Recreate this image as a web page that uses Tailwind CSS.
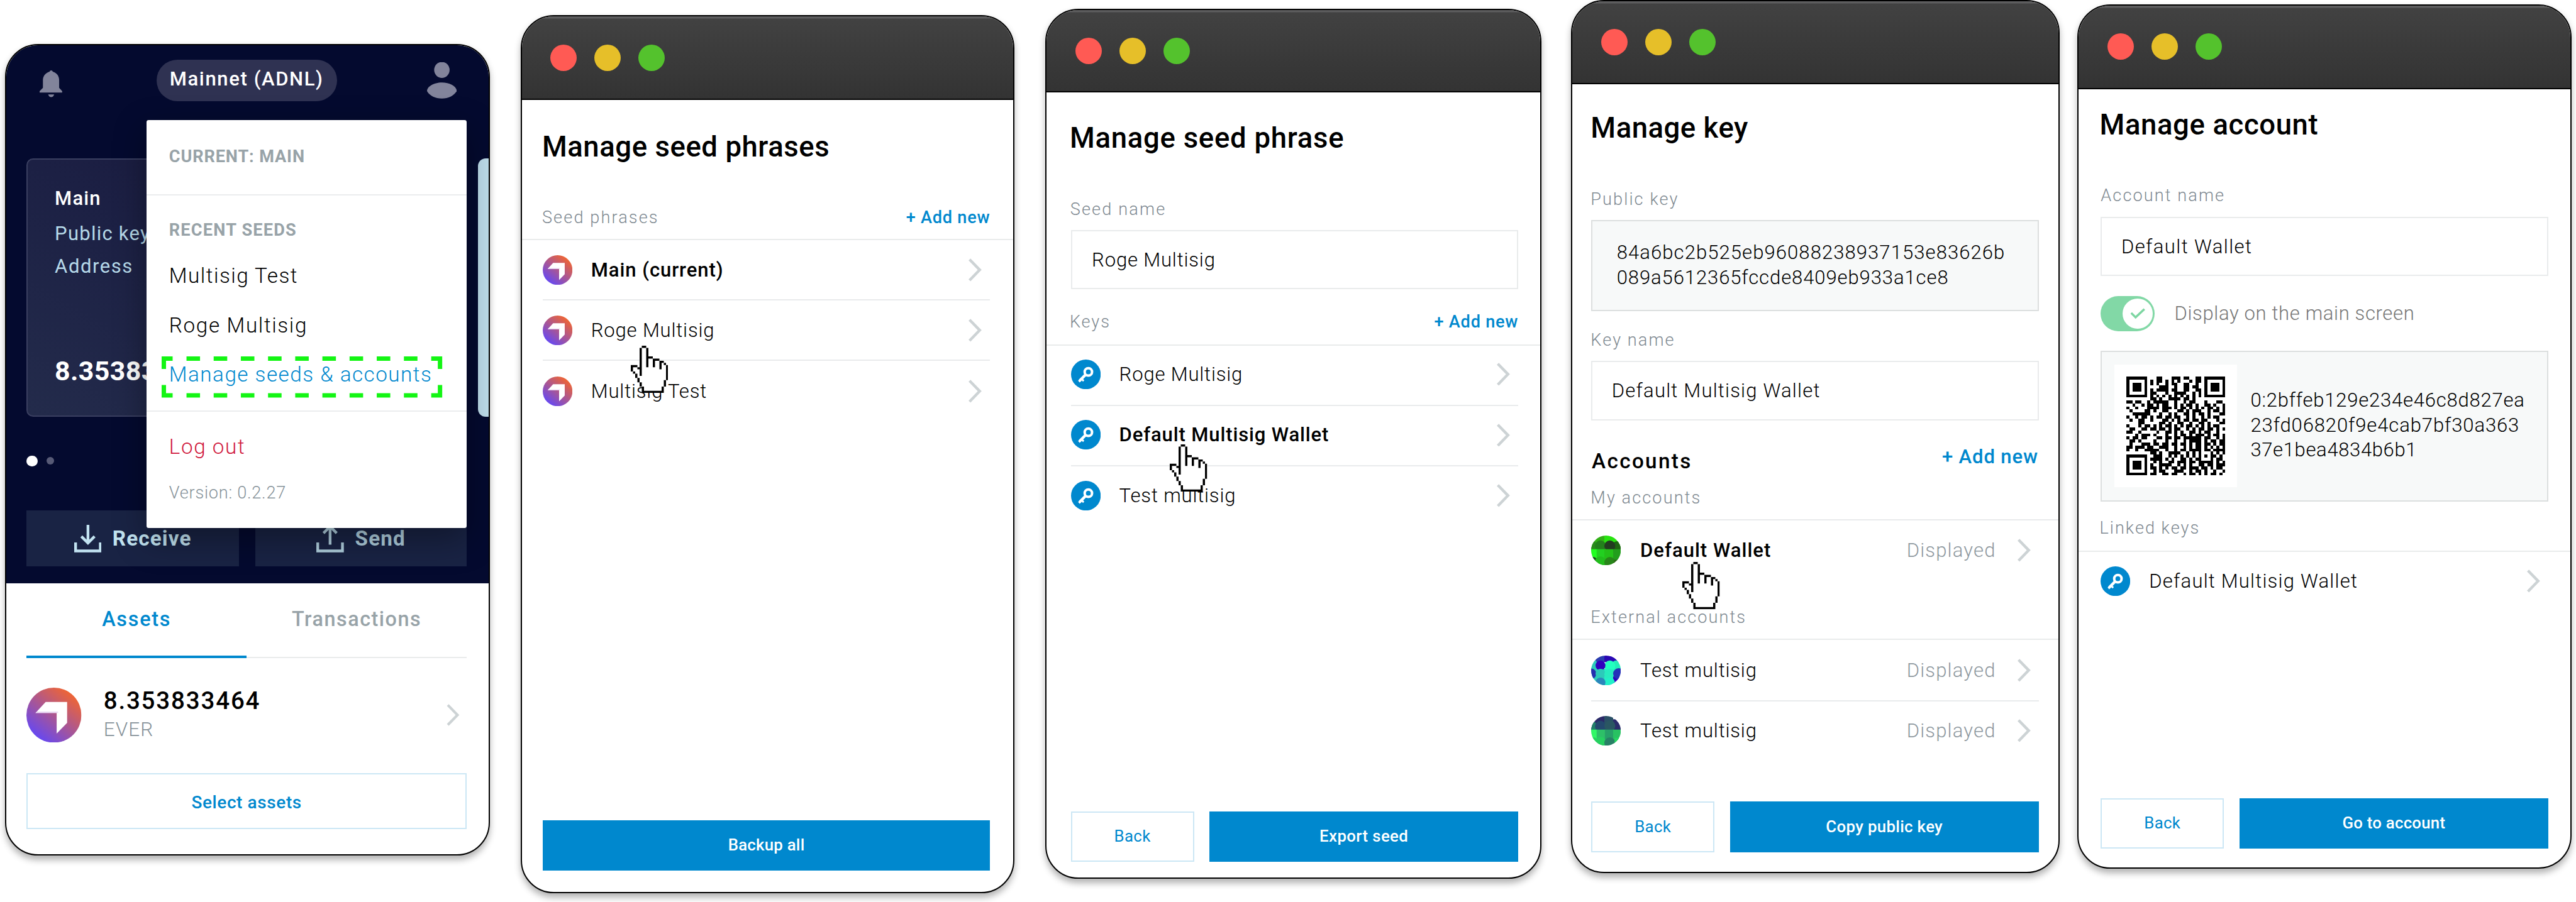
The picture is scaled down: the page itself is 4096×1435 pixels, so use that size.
<!DOCTYPE html>
<html lang="en">
<head>
<meta charset="utf-8">
<title>Seeds and accounts</title>
<script src="https://cdn.jsdelivr.net/npm/@tailwindcss/browser@4"></script>
</head>
<body class="bg-white overflow-hidden">
<svg class="absolute w-0 h-0" aria-hidden="true">
  <defs>
    <linearGradient id="ever-g" x1="0.15" y1="0.9" x2="0.8" y2="0.1"><stop offset="0" stop-color="#6347f5"/><stop offset="1" stop-color="#ee6535"/></linearGradient>
    <clipPath id="round"><circle cx="27" cy="27" r="27"/></clipPath>
  </defs>
  <symbol id="ever" viewBox="0 0 100 100"><circle cx="50" cy="50" r="50" fill="url(#ever-g)"/><path d="M16.5 46 35 26H74V64L55 83.500V46Z" fill="#fff"/><path d="M16.500 46 19 43.500H57.500V46Z" fill="#e9d9f3"/></symbol>
  <symbol id="chev" viewBox="0 0 26 42"><path d="M3 2 21.500 21 3 40" fill="none" stroke="#cdd3d5" stroke-width="5"/></symbol>
  <symbol id="key" viewBox="0 0 54 54"><circle cx="27" cy="27" r="27" fill="#0088ce"/><g fill="none" stroke="#fff"><circle cx="31.500" cy="22.500" r="6.700" stroke-width="4.600"/><path d="M27 27 15.500 38.500" stroke-width="5"/><path d="M18.500 34.500l4.500 4.500M14 37.500l3 3" stroke-width="3.400"/></g></symbol>
  <symbol id="hand" viewBox="0 0 17 22" preserveAspectRatio="none">
    <path fill="#fff" d="M5 1h2v5h3v1h3v1h3v1v7h-1v3h-1v3H5.500v-3h-1v-2h-1v-2h-1v-2h-1v-1H1v-3h3V1z"/>
    <path fill="#000" d="M5 0h2v1H5zM4 1h1v13H4zM7 1h1v9H7zM8 5h2v1H8zM10 6h3v1h-3zM10 6h1v4h-1zM13 7h2v1h-2zM13 7h1v4h-1zM15 8h1v1h-1zM16 9h1v7h-1zM15 16h1v3h-1zM14 19h1v3h-1zM5 21h10v1H5zM5 19h1v2H5zM4 17h1v2H4zM3 15h1v2H3zM2 13h1v2H2zM1 12h1v1H1zM0 9h1v3H0zM0 9h3v1H0zM3 10h1v1H3z"/>
  </symbol>
</svg>

<main class="flex items-start w-[4682px] h-[1640px] [zoom:0.87484] font-[Roboto,sans-serif] text-black text-[35.5px] leading-none whitespace-nowrap">

  <!-- Wallet home with profile menu -->
  <section class="relative shrink-0 ml-[9px] mt-[80px] w-[882px] h-[1476px] rounded-[60px] border-3 border-black bg-white overflow-hidden shadow-[0_8px_12px_rgba(0,0,0,0.3)] flex flex-col">
    <div class="relative shrink-0 h-[978px] bg-[#040a2f] flex flex-col">
      <header class="flex items-center mt-[26px] h-[76px]">
        <svg class="ml-[61px] mt-[10px] w-[42px] h-[51px] shrink-0" viewBox="0 0 42 51" fill="#82849b"><path d="M18 4.500a3.200 3.200 0 0 1 6 0C32 7 35.500 13 35.500 20v14L41 40v2.500H0V40l6-6V20C6 13 10 7 18 4.500Z"/><path d="M15.500 46h11c-1 3-3 5-5.500 5s-4.500-2-5.500-5Z"/></svg>
        <div class="ml-[170px] w-[328px] h-[76px] rounded-full bg-[#2f3252] text-white font-medium tracking-[1.83px] flex items-center justify-center pb-[6px]">Mainnet (ADNL)</div>
        <svg class="ml-[164px] w-[54px] h-[66px] shrink-0" viewBox="0 0 54 66" fill="#82849b"><ellipse cx="27" cy="14" rx="14" ry="14.500"/><path d="M27 37c15 0 27 7.500 27 15.500C49 61 39 66 27 66S5 61 0 52.500C0 44.500 12 37 27 37Z"/></svg>
      </header>
      <div class="flex mt-[104px] h-[470px] ml-[37px] overflow-hidden">
        <div class="shrink-0 w-[800px] rounded-[12px] border-3 border-[#3a3f60] bg-linear-to-tr from-[#232b4b] via-[#1c2044] to-[#17163a] pl-[49px] pt-[38px] text-[#b6d9e9]">
          <div class="h-[66px] leading-[66px] text-white font-medium tracking-[1.33px]">Main</div>
          <div class="h-[62px] leading-[62px] tracking-[1.4px]">Public key</div>
          <div class="h-[58px] leading-[58px] tracking-[1.77px]">Address</div>
          <div class="mt-[130px] h-[60px] leading-[60px] text-white text-[49px] font-bold tracking-[0.44px]">8.353833464</div>
        </div>
        <div class="ml-[20px] shrink-0 w-[400px] rounded-[14px] bg-[#bfdeec]"></div>
      </div>
      <div class="flex items-center gap-[16px] mt-[70px] ml-[37px] h-[20px]"><i class="size-[20px] rounded-full bg-white"></i><i class="size-[14px] rounded-full bg-[#575a76] -mt-px"></i></div>
      <div class="flex mt-[80px] ml-[37px] gap-[30px] h-[102px] text-[#c2e3f1] text-[38px] font-bold">
        <div class="w-[386px] bg-[#192344] flex items-center justify-center gap-[20px] tracking-[1.3px]">
          <svg class="size-[50px]" viewBox="0 0 50 50" fill="none" stroke="currentColor" stroke-width="5"><path d="M2.500 32v15.500h45V32M25 0v34M13 21l12 12 12-12"/></svg>Receive
        </div>
        <div class="w-[384px] bg-[#192344] flex items-center justify-center gap-[20px] tracking-[1.3px] text-[#b0cfde]">
          <svg class="size-[50px]" viewBox="0 0 50 50" fill="none" stroke="currentColor" stroke-width="5"><path d="M2.500 32v15.500h45V32M25 36V3M13 15 25 3l12 12"/></svg>Send
        </div>
      </div>

      <div class="absolute left-[255px] top-[136px] w-[582px] h-[742px] rounded-[4px] bg-white shadow-[0_20px_60px_rgba(0,0,0,0.35)] flex flex-col">
        <div class="h-[137px] border-b-3 border-[#ebedee] pl-[41px] flex items-center text-[31px] font-bold text-[#98a3a8] tracking-[1px]">CURRENT: MAIN</div>
        <div class="pl-[41px] mt-[44px] h-[40px] leading-[40px] text-[31px] font-bold text-[#98a3a8] tracking-[1.38px]">RECENT SEEDS</div>
        <div class="pl-[41px] mt-[18px] text-[38px] font-light leading-[90px]">
          <div class="tracking-[1.71px]">Multisig Test</div>
          <div class="tracking-[1.88px]">Roge Multisig</div>
          <div class="relative tracking-[1.7px] text-[#0088ce]">Manage seeds &amp; accounts
            <svg class="absolute -left-[13px] top-[11px] w-[510px] h-[75px]" viewBox="0 0 510 75" fill="none" stroke="#14f514" stroke-width="8">
              <path d="M20 4H4V23M490 4h16V23M20 71H4V52M490 71h16V52"/>
              <path d="M45.200 4H466M45.200 71H466" stroke-dasharray="24.600 24.800"/>
            </svg>
          </div>
        </div>
        <div class="mt-[19px] border-t-3 border-[#ebedee] pt-[35px] pl-[41px]">
          <div class="h-[60px] leading-[60px] text-[38px] font-light text-[#d0173c] tracking-[1.82px]">Log out</div>
          <div class="mt-[33px] h-[40px] leading-[40px] text-[31px] font-light text-[#87939a] tracking-[0.88px]">Version: 0.2.27</div>
        </div>
      </div>
    </div>

    <div class="flex h-[136px] ml-[37px] w-[800px] text-[37px] font-medium text-center">
      <div class="w-[400px] h-[136px] leading-[131px] border-b-5 border-[#0088ce] text-[#0088ce] tracking-[2px]">Assets</div>
      <div class="w-[400px] h-[136px] leading-[131px] border-b-3 border-[#e9ebec] text-[#98a3a8] tracking-[1.74px]">Transactions</div>
    </div>
    <div class="flex items-center mt-[54px] h-[100px] ml-[37px] w-[800px]">
      <svg class="size-[100px]"><use href="#ever"/></svg>
      <div class="ml-[40px] grow">
        <div class="h-[53px] leading-[53px] text-[44px] font-medium tracking-[2.1px]">8.353833464</div>
        <div class="h-[52px] leading-[52px] text-[36px] font-light text-[#87939a] tracking-[1.3px]">EVER</div>
      </div>
      <svg class="w-[26px] h-[40px] mr-[12px]"><use href="#chev"/></svg>
    </div>
    <div class="mt-[56px] ml-[37px] w-[800px] h-[102px] border-3 border-[#cce7f5] text-[#0088ce] text-[32px] font-medium tracking-[0.7px] flex items-center justify-center pt-[5px]">Select assets</div>
  </section>

  <!-- Manage seed phrases -->
  <section class="relative shrink-0 ml-[55px] mt-[28px] w-[898px] h-[1596px] rounded-[60px] border-3 border-black bg-white overflow-hidden shadow-[0_8px_12px_rgba(0,0,0,0.3)] flex flex-col">
    <div class="shrink-0 h-[152px] border-b-3 border-black bg-linear-to-b from-[#424242] to-[#333333] shadow-[inset_0_4px_0_#5d5d5e] flex items-center gap-[32px] pl-[52px]"><i class="size-[48px] rounded-full bg-[#ff5a54]"></i><i class="size-[48px] rounded-full bg-[#e6bf29]"></i><i class="size-[48px] rounded-full bg-[#54c22d]"></i></div>
    <h1 class="pl-[37px] h-[167px] leading-[171px] text-[52px] font-medium tracking-[0.65px]">Manage seed phrases</h1>
    <div class="mt-[9px] h-[78px] border-b-3 border-[#e9ebec] pl-[37px] pr-[42px] flex items-center justify-between text-[31px]"><span class="font-light text-[#7f8a92] tracking-[2.42px]">Seed phrases</span><span class="font-medium text-[#0088ce] tracking-[0.88px]">+ Add new</span></div>
    <div class="ml-[38px] mr-[42px] font-light">
      <div class="h-[110px] border-b-3 border-[#e9ebec] flex items-center pt-[2px]"><svg class="size-[54px]"><use href="#ever"/></svg><span class="ml-[34px] grow font-medium tracking-[1.06px]">Main (current)</span><svg class="w-[26px] h-[42px] mr-[14px]"><use href="#chev"/></svg></div>
      <div class="h-[110px] border-b-3 border-[#e9ebec] flex items-center pt-[2px]"><svg class="size-[54px]"><use href="#ever"/></svg><span class="ml-[34px] grow tracking-[0.95px]">Roge Multisig</span><svg class="w-[26px] h-[42px] mr-[14px]"><use href="#chev"/></svg></div>
      <div class="h-[110px] flex items-center"><svg class="size-[54px]"><use href="#ever"/></svg><span class="ml-[34px] grow tracking-[0.95px]">Multisig Test</span><svg class="w-[26px] h-[42px] mr-[14px]"><use href="#chev"/></svg></div>
    </div>
    <div class="mt-auto mb-[38px] ml-[38px] mr-[42px] h-[92px] bg-[#0088ce] text-white text-[29.5px] font-medium tracking-[0.27px] flex items-center justify-center">Backup all</div>
    <svg class="absolute left-[198px] top-[598px] w-[68px] h-[86px]"><use href="#hand"/></svg>
  </section>

  <!-- Manage seed phrase -->
  <section class="relative shrink-0 ml-[56px] mt-[16px] w-[902px] h-[1582px] rounded-[60px] border-3 border-black bg-white overflow-hidden shadow-[0_8px_12px_rgba(0,0,0,0.3)] flex flex-col">
    <div class="shrink-0 h-[150px] border-b-3 border-black bg-linear-to-b from-[#424242] to-[#333333] shadow-[inset_0_4px_0_#5d5d5e] flex items-center gap-[32px] pl-[52px]"><i class="size-[48px] rounded-full bg-[#ff5a54]"></i><i class="size-[48px] rounded-full bg-[#e6bf29]"></i><i class="size-[48px] rounded-full bg-[#54c22d]"></i></div>
    <h1 class="pl-[42px] h-[163px] leading-[167px] text-[52px] font-medium tracking-[0.85px]">Manage seed phrase</h1>
    <div class="pl-[43px] mt-[34px] h-[30px] leading-[30px] text-[31px] font-light text-[#7f8a92] tracking-[2.45px]">Seed name</div>
    <div class="mt-[23px] ml-[44px] mr-[40px] h-[108px] border-3 border-[#e9ebec] pl-[36px] flex items-center font-light tracking-[0.95px]">Roge Multisig</div>
    <div class="mt-[19px] h-[83px] border-b-3 border-[#e9ebec] pl-[42px] pr-[40px] flex items-center justify-between text-[31px]"><span class="font-light text-[#7f8a92] tracking-[2.2px]">Keys</span><span class="font-medium text-[#0088ce] tracking-[0.88px]">+ Add new</span></div>
    <div class="ml-[44px] mr-[40px] font-light">
      <div class="h-[110px] border-b-3 border-[#e9ebec] flex items-center pb-[2px]"><svg class="size-[54px]"><use href="#key"/></svg><span class="ml-[34px] grow tracking-[0.95px]">Roge Multisig</span><svg class="w-[26px] h-[42px] mr-[14px]"><use href="#chev"/></svg></div>
      <div class="h-[110px] border-b-3 border-[#e9ebec] flex items-center pb-[2px]"><svg class="size-[54px]"><use href="#key"/></svg><span class="ml-[34px] grow font-medium tracking-[0.98px]">Default Multisig Wallet</span><svg class="w-[26px] h-[42px] mr-[14px]"><use href="#chev"/></svg></div>
      <div class="h-[106px] flex items-center"><svg class="size-[54px]"><use href="#key"/></svg><span class="ml-[34px] grow tracking-[0.95px]">Test multisig</span><svg class="w-[26px] h-[42px] mr-[14px]"><use href="#chev"/></svg></div>
    </div>
    <div class="mt-auto mb-[28px] ml-[44px] mr-[40px] h-[92px] flex gap-[28px] text-[29.5px]">
      <div class="w-[224px] border-3 border-[#cce7f5] text-[#0088ce] tracking-[0.39px] flex items-center justify-center">Back</div>
      <div class="grow bg-[#0088ce] text-white font-medium tracking-[0.45px] flex items-center justify-center">Export seed</div>
    </div>
    <svg class="absolute left-[224px] top-[790px] w-[68px] h-[86px]"><use href="#hand"/></svg>
  </section>

  <!-- Manage key -->
  <section class="relative shrink-0 ml-[54px] w-[888px] h-[1588px] rounded-[60px] border-3 border-black bg-white overflow-hidden shadow-[0_8px_12px_rgba(0,0,0,0.3)] flex flex-col">
    <div class="shrink-0 h-[151px] border-b-3 border-black bg-linear-to-b from-[#424242] to-[#333333] shadow-[inset_0_4px_0_#5d5d5e] flex items-center gap-[32px] pl-[52px]"><i class="size-[48px] rounded-full bg-[#ff5a54]"></i><i class="size-[48px] rounded-full bg-[#e6bf29]"></i><i class="size-[48px] rounded-full bg-[#54c22d]"></i></div>
    <h1 class="pl-[33px] h-[156px] leading-[160px] text-[52px] font-medium tracking-[0.6px]">Manage key</h1>
    <div class="pl-[33px] mt-[38px] h-[30px] leading-[30px] text-[31px] font-light text-[#7f8a92] tracking-[2.4px]">Public key</div>
    <div class="mt-[23px] ml-[34px] mr-[36px] h-[166px] border-3 border-[#dcdfdf] bg-[#f7f9f9] pl-[44px] pt-[34px] font-light leading-[45.5px]">
      <div class="tracking-[1.22px]">84a6bc2b525eb96088238937153e83626b</div>
      <div class="tracking-[1.02px]">089a5612365fccde8409eb933a1ce8</div>
    </div>
    <div class="pl-[33px] mt-[37px] h-[30px] leading-[30px] text-[31px] font-light text-[#7f8a92] tracking-[2.4px]">Key name</div>
    <div class="mt-[23px] ml-[34px] mr-[36px] h-[108px] border-3 border-[#e9ebec] pl-[35px] flex items-center font-light tracking-[1.37px]">Default Multisig Wallet</div>
    <div class="mt-[54px] ml-[35px] mr-[37px] h-[40px] flex justify-between font-medium"><span class="text-[38px] leading-[40px] tracking-[2.7px]">Accounts</span><span class="text-[35.5px] leading-[26px] text-[#0088ce] tracking-[1px]">+ Add new</span></div>
    <div class="mt-[9px] h-[79px] border-b-3 border-[#e9ebec] pl-[33px] flex items-center text-[31px] font-light text-[#7f8a92] tracking-[2.4px]">My accounts</div>
    <div class="ml-[34px] mr-[36px] h-[110px] flex items-center font-light">
      <svg class="size-[54px]" viewBox="0 0 54 54"><g clip-path="url(#round)"><path fill="#32b016" d="M0 0h24v27H0z"/><path fill="#28e310" d="M24 0h30v27H24z"/><circle cx="1" cy="19" r="10" fill="#2a8c1c"/><circle cx="48" cy="20" r="10" fill="#1f6612"/><circle cx="17" cy="19" r="10" fill="#23801c"/><circle cx="34" cy="19" r="10" fill="#233c20"/><path fill="#1f6612" d="M44 16h10v9H44z"/><path fill="#20ff20" d="M0 25h11v20H0z"/><path fill="#22d020" d="M10 25h14v29H10z"/><path fill="#24c018" d="M24 25h16v20H24z"/><path fill="#229e1c" d="M40 25h14v20H40z"/><circle cx="4" cy="46" r="7" fill="#1d4a20"/><circle cx="17" cy="48" r="10" fill="#22bc1c"/><circle cx="34" cy="49" r="10" fill="#28861a"/><path fill="#2a6814" d="M42 44h12v10H40z"/></g></svg>
      <span class="ml-[35px] font-medium tracking-[1.15px]">Default Wallet</span><span class="ml-auto text-[#8f999f] tracking-[1.32px]">Displayed</span><svg class="ml-[38px] w-[26px] h-[42px] mr-[14px]"><use href="#chev"/></svg>
    </div>
    <div class="mt-[29px] h-[79px] border-b-3 border-[#e9ebec] pl-[33px] flex items-center text-[31px] font-light text-[#7f8a92] tracking-[2.37px]">External accounts</div>
    <div class="ml-[34px] mr-[36px] font-light">
      <div class="h-[112px] border-b-3 border-[#e9ebec] flex items-center">
        <svg class="size-[54px]" viewBox="0 0 54 54"><g clip-path="url(#round)"><path fill="#2a3db0" d="M0 0h24v12H0z"/><path fill="#2a08b4" d="M24 0h30v12H24z"/><path fill="#2ccaba" d="M0 9h12v45H0z"/><path fill="#2dcfba" d="M8 24h18v30H8z"/><circle cx="16" cy="6" r="8" fill="#2a3db0"/><circle cx="48" cy="20" r="12" fill="#24ecb8"/><path fill="#2a08b4" d="M34 0h20v9H34z"/><circle cx="34" cy="19" r="10" fill="#22ffc0"/><path fill="#24f0c4" d="M24 25h18v29H24z"/><circle cx="17" cy="18" r="9" fill="#3000be"/><circle cx="0" cy="33" r="9.500" fill="#2530ae"/><circle cx="17" cy="33" r="9" fill="#2ccaba"/><circle cx="34" cy="34" r="10" fill="#27ecc0"/><path fill="#3000be" d="M40 38h14v16H40z"/><circle cx="50" cy="33" r="10" fill="#2530b8"/><circle cx="34" cy="49" r="9" fill="#22f0c8"/><circle cx="17" cy="49" r="9" fill="#2b86bb"/></g></svg>
        <span class="ml-[35px] tracking-[0.95px]">Test multisig</span><span class="ml-auto text-[#8f999f] tracking-[1.32px]">Displayed</span><svg class="ml-[38px] w-[26px] h-[42px] mr-[14px]"><use href="#chev"/></svg>
      </div>
      <div class="h-[106px] flex items-center">
        <svg class="size-[54px]" viewBox="0 0 54 54"><g clip-path="url(#round)"><path fill="#2b2a68" d="M0 0h24v27H0z"/><path fill="#2a5066" d="M24 0h16v27H24z"/><path fill="#2a2c6a" d="M40 6h14v20H40z"/><circle cx="2" cy="19" r="9" fill="#208068"/><circle cx="17" cy="19" r="10" fill="#24486e"/><circle cx="34" cy="18" r="10" fill="#2a5662"/><path fill="#30f866" d="M0 25h11v20H0z"/><path fill="#2dc068" d="M10 25h16v29H10z"/><path fill="#26a068" d="M25 25h16v20H25z"/><path fill="#28c262" d="M40 25h14v29H40z"/><circle cx="4" cy="48" r="9" fill="#24d45e"/><circle cx="17" cy="48" r="10" fill="#26d060"/><circle cx="34" cy="49" r="10" fill="#288066"/><path fill="#24d860" d="M43 40h11v14H42z"/></g></svg>
        <span class="ml-[35px] tracking-[0.95px]">Test multisig</span><span class="ml-auto text-[#8f999f] tracking-[1.32px]">Displayed</span><svg class="ml-[38px] w-[26px] h-[42px] mr-[14px]"><use href="#chev"/></svg>
      </div>
    </div>
    <div class="mt-auto mb-[36px] ml-[34px] mr-[36px] h-[92px] flex gap-[28px] text-[29.5px]">
      <div class="w-[224px] border-3 border-[#cce7f5] text-[#0088ce] tracking-[0.39px] flex items-center justify-center">Back</div>
      <div class="grow bg-[#0088ce] text-white font-medium tracking-[0.38px] flex items-center justify-center">Copy public key</div>
    </div>
    <svg class="absolute left-[200px] top-[1020px] w-[68px] h-[86px]"><use href="#hand"/></svg>
  </section>

  <!-- Manage account -->
  <section class="relative shrink-0 ml-[32px] mt-[8px] w-[898px] h-[1572px] rounded-[60px] border-3 border-black bg-white overflow-hidden shadow-[0_8px_12px_rgba(0,0,0,0.3)] flex flex-col">
    <div class="shrink-0 h-[152px] border-b-3 border-black bg-linear-to-b from-[#424242] to-[#333333] shadow-[inset_0_4px_0_#5d5d5e] flex items-center gap-[32px] pl-[52px]"><i class="size-[48px] rounded-full bg-[#ff5a54]"></i><i class="size-[48px] rounded-full bg-[#e6bf29]"></i><i class="size-[48px] rounded-full bg-[#54c22d]"></i></div>
    <h1 class="pl-[38px] h-[127px] leading-[130px] text-[52px] font-medium tracking-[0.7px]">Manage account</h1>
    <div class="pl-[40px] mt-[51px] h-[30px] leading-[30px] text-[31px] font-light text-[#7f8a92] tracking-[2.4px]">Account name</div>
    <div class="mt-[24px] ml-[40px] mr-[40px] h-[108px] border-3 border-[#e9ebec] pl-[35px] flex items-center font-light tracking-[1.6px]">Default Wallet</div>
    <div class="mt-[36px] ml-[40px] h-[64px] flex items-center gap-[36px] font-light text-[#777] tracking-[0.72px]">
      <div class="w-[98px] h-full rounded-full bg-[#82d8a6] flex items-center justify-end pr-[3px]"><div class="size-[55px] rounded-full bg-white flex items-center justify-center"><svg class="w-[28px] h-[20px]" viewBox="0 0 28 20" fill="none" stroke="#7dd6a2" stroke-width="4"><path d="M2 9l8 8L26 2"/></svg></div></div>
      Display on the main screen
    </div>
    <div class="mt-[36px] ml-[40px] mr-[40px] h-[274px] border-3 border-[#dcdfdf] bg-[#f7f9f9] p-[22px] flex">
      <div class="size-[224px] bg-white flex items-center justify-center"><svg class="size-[180px]" viewBox="0 0 33 33" shape-rendering="crispEdges"><path id="qr" fill="#000"/></svg></div>
      <div class="ml-[24px] pt-[43px] font-light leading-[45px]">
        <div class="tracking-[0.87px]">0:2bffeb129e234e46c8d827ea</div>
        <div class="tracking-[1px]">23fd06820f9e4cab7bf30a363</div>
        <div class="tracking-[0.7px]">37e1bea4834b6b1</div>
      </div>
    </div>
    <div class="mt-[8px] h-[84px] border-b-3 border-[#e9ebec] pl-[38px] flex items-center text-[31px] font-light text-[#7f8a92] tracking-[2.3px]">Linked keys</div>
    <div class="ml-[40px] mr-[40px] h-[106px] flex items-center font-light"><svg class="size-[54px]"><use href="#key"/></svg><span class="ml-[34px] grow tracking-[1.37px]">Default Multisig Wallet</span><svg class="w-[26px] h-[42px] mr-[14px]"><use href="#chev"/></svg></div>
    <div class="mt-auto mb-[34px] ml-[40px] mr-[40px] h-[92px] flex gap-[28px] text-[29.5px]">
      <div class="w-[224px] border-3 border-[#cce7f5] text-[#0088ce] tracking-[0.39px] flex items-center justify-center">Back</div>
      <div class="grow bg-[#0088ce] text-white font-medium tracking-[0.27px] flex items-center justify-center">Go to account</div>
    </div>
  </section>
</main>

<script>
// Wallet address QR modules, one string per row
const rows = [
  '#######...##...###.##..##.#######',
  '#.....#.#.##.#.#.#...#.##.#.....#',
  '#.###.#.#.#..#.##..##..#..#.###.#',
  '#.###.#....###..#..##.##..#.###.#',
  '#.###.#.#.####.##..##..##.#.###.#',
  '#.....#.##...#..####..#.#.#.....#',
  '#######.#.#.#.#.#.#.#.#.#.#######',
  '........##.#..####.##.#..........',
  '##.##..#.#####..#..#.##...#...##.',
  '..#..#.##.#.##..#.#.##.#..##.#..#',
  '#..#...####.###.#.##.#.#.#.##.#.#',
  '.#....##.#..##...##.#.###..#.##.#',
  '..######...#..#.#..##.#.##.#...##',
  '#..#.##.#.##.##.##..#.#..#.#.##..',
  '.#..##..#...##.#.#.##.##.##...#.#',
  '....##.....##.#..##..#..##.#...##',
  '#...#.##.#.#.##.#.#.##.#.#.#.##..',
  '.##..##.##.##.#.##..#.#.##.##.#.#',
  '##..#.....#..##.#.#..##.#.##..#..',
  '...#.###.#...#..#.##.#.###.#.##.#',
  '#.##.##...##.##.##.######.##..#.#',
  '.##.#....#...#..#..#.####.#.##.##',
  '.#...###.##.##.##.##.#.##.##.#.##',
  '##.###.##..###..#..#.#.##.#.#.#.#',
  '#..#..#####..#..#.##.####.##.####',
  '........##.#..####..#.#.#...#.#.#',
  '#######..###..#.#.#.#.#.#.#.##.#.',
  '#.....#.####.#.#..##.#.##...#.##.',
  '#.###.#..#.#..##.###.##.#####.#.#',
  '#.###.#.#..####..#.#.#..##.##.###',
  '#.###.#.##.#.#.##.##.###.##.#.##.',
  '#.....#..#.##...###..#.##.#..#..#',
  '#######.##..##.##..#.##.#.#.##.#.'
];
let d = '';
rows.forEach((r, y) => [...r].forEach((c, x) => { if (c === '#') d += `M${x} ${y}h1v1h-1z`; }));
document.getElementById('qr').setAttribute('d', d);
</script>
</body>
</html>
